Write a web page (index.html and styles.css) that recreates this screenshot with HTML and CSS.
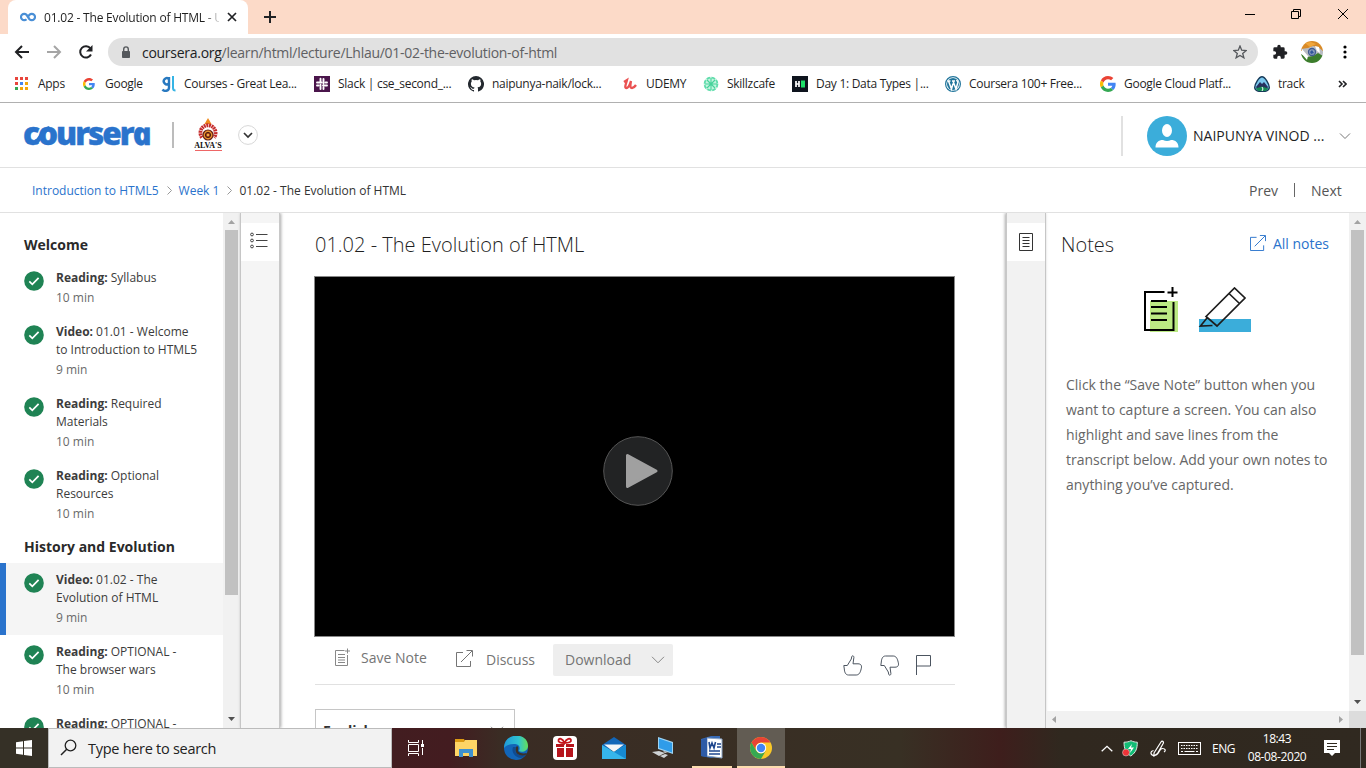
FILE: index.html
```html
<!DOCTYPE html>
<html lang="en">
<head>
<meta charset="utf-8">
<title>01.02 - The Evolution of HTML</title>
<link rel="stylesheet" href="styles.css">
</head>
<body>
<svg class="defs" width="0" height="0">
  <symbol id="check" viewBox="0 0 20 20"><circle cx="10" cy="10" r="9.8" fill="#1f8354"/><path d="M5.3 10.4l3 3 6.3-6.6" fill="none" stroke="#fff" stroke-width="1.7"/></symbol>
  <symbol id="g" viewBox="0 0 48 48"><path fill="#ea4335" d="M24 9.5c3.5 0 6.7 1.2 9.2 3.6l6.9-6.9C35.9 2.4 30.5 0 24 0 14.6 0 6.5 5.4 2.6 13.2l8 6.2C12.4 13.7 17.7 9.5 24 9.5z"/><path fill="#4285f4" d="M47 24.6c0-1.6-.2-3.1-.4-4.6H24v9h12.9c-.6 3-2.3 5.5-4.8 7.2l7.700 6C44.400 38 47 31.800 47 24.600z"/><path fill="#fbbc05" d="M10.500 28.600A14.500 14.500 0 0 1 10.500 19.400l-8-6.200a24 24 0 0 0 0 21.600z"/><path fill="#34a853" d="M24 48c6.500 0 11.900-2.100 15.900-5.800l-7.700-6c-2.200 1.500-4.900 2.300-8.200 2.300-6.300 0-11.600-4.200-13.500-9.900l-8 6.200C6.500 42.600 14.600 48 24 48z"/></symbol>
  <symbol id="share" viewBox="0 0 17 17"><path d="M7 2.500H.5v14h14V11M5 12L16 1M10.500.5h6v6" fill="none" stroke="currentColor"/></symbol>
</svg>
<div class="tabstrip">
  <div class="tab">
    <svg class="fav" width="16" height="10" viewBox="0 0 16 10"><path d="M6.500 7.200A3.200 3.200 0 1 1 6.500 2.800L9.500 7.200A3.200 3.200 0 1 0 9.500 2.800L8.500 4" fill="none" stroke="#4a8fd6" stroke-width="2.200"/></svg>
    <span class="tab-title">01.02 - The Evolution of HTML - U</span>
    <svg width="10" height="10"><path d="M1 1l8 8M9 1L1 9" stroke="#202124" stroke-width="1.700"/></svg>
  </div>
  <svg class="plus" width="12" height="12"><path d="M6 0v12M0 6h12" stroke="#202124" stroke-width="2"/></svg>
  <div class="winbtns">
    <svg width="10" height="12"><path d="M0 6.500h10" stroke="#000"/></svg>
    <svg width="12" height="12"><path d="M1.500 3.500h7v7h-7zM3.500 3.500v-2h7v7h-2" fill="none" stroke="#000"/></svg>
    <svg width="12" height="12"><path d="M1 1l10 10M11 1L1 11" stroke="#000"/></svg>
  </div>
</div>
<div class="toolbar">
  <svg class="nav" width="90" height="16" viewBox="0 0 90 16"><path d="M15 8H2M8 2L2 8l6 6" fill="none" stroke="#202124" stroke-width="2"/><path d="M33 8h13M40 2l6 6-6 6" fill="none" stroke="#a5a5a5" stroke-width="2"/><path d="M76.500 4.500A5.700 5.700 0 1 0 77 10.500" fill="none" stroke="#202124" stroke-width="2"/><path d="M78.500 1v6.500H72z" fill="#202124"/></svg>
  <div class="omnibox">
    <svg width="10" height="13"><path d="M1.500 5.500h7v6h-7z" fill="#55585c" stroke="#55585c"/><path d="M2.700 5V3.200a2.300 2.300 0 0 1 4.600 0V5" fill="none" stroke="#55585c" stroke-width="1.400"/></svg>
    <span class="url"><b>coursera.org</b>/learn/html/lecture/Lhlau/01-02-the-evolution-of-html</span>
    <svg width="14" height="14" viewBox="0 0 14 14"><path d="M7 1l1.700 4.200 4.500.3-3.500 2.900 1.200 4.400L7 10.400l-3.900 2.400 1.200-4.400L.8 5.500l4.500-.3z" fill="none" stroke="#55585c" stroke-width="1.300"/></svg>
  </div>
  <svg class="puzzle" width="16" height="16" viewBox="0 0 24 24"><path fill="#202124" d="M20.500 11H19V7a2 2 0 0 0-2-2h-4V3.500a2.500 2.500 0 0 0-5 0V5H4a2 2 0 0 0-2 2v3.800h1.500a2.700 2.700 0 0 1 0 5.400H2V20c0 1.100.9 2 2 2h3.800v-1.500a2.700 2.700 0 0 1 5.400 0V22H17a2 2 0 0 0 2-2v-4h1.500a2.500 2.500 0 0 0 0-5z"/></svg>
  <svg class="profile" width="22" height="22"><clipPath id="pc"><circle cx="11" cy="11" r="11"/></clipPath><g clip-path="url(#pc)"><path fill="#d98a26" d="M0 0h22v10H0z"/><path fill="#f0a63c" d="M4 2l6-1 5 2-6 3z"/><path fill="#b9bcc2" d="M0 8l7-1 5-2 5 1 5 4v5l-8 2-10-2z"/><path fill="#3c7d2c" d="M0 13l6 3 6-1 5-3 5 3v9H0z"/><path d="M1 8l6 7-1 4-6-7zM14 5l4 1 1 6-3-2z" fill="#fff"/><circle cx="11" cy="11" r="3.500" fill="#8d9fbd" stroke="#405c92" stroke-width="1.300"/><path d="M9 11l2-2 2 3-3 1z" fill="#31549b"/></g></svg>
  <svg width="4" height="14"><circle cx="2" cy="2" r="1.600"/><circle cx="2" cy="7" r="1.600"/><circle cx="2" cy="12" r="1.600"/></svg>
</div>
<div class="bookmarks">
  <div class="bm bm-apps"><svg width="14" height="14"><path fill="#e8453c" d="M1 0h3v3H1zM6 0h3v3H6zM11 0h3v3h-3zM1 5h3v3H1z"/><path fill="#4285f4" d="M6 5h3v3H6z"/><path fill="#f2a60c" d="M11 5h3v3h-3zM6 10h3v3H6zM11 10h3v3h-3z"/><path fill="#34a853" d="M1 10h3v3H1z"/></svg><span>Apps</span></div>
  <div class="bm bm-google"><svg width="12" height="12"><use href="#g"/></svg><span>Google</span></div>
  <div class="bm"><svg width="15" height="16"><path d="M7.800 3a3 3 0 1 0 0 4.500M8 1v10.500c0 4-5 4-6.500 2" fill="none" stroke="#2879c0" stroke-width="2.400"/><path d="M12 0v12c0 2 1 2.500 2.500 2.500" fill="none" stroke="#35b4e5" stroke-width="2"/></svg><span>Courses - Great Lea...</span></div>
  <div class="bm"><svg width="16" height="16"><path fill="#4a154b" d="M0 0h16v16H0z"/><path d="M6.500 2.800v3M3 6.500h4.500M9.500 3v4.500M11.500 6.500h1.500M3 9.500h1.500M6.500 8.800v4.200M9 9.500h4M9.500 11.500v1.500" stroke="#fff" stroke-width="1.900" stroke-linecap="round"/></svg><span>Slack | cse_second_...</span></div>
  <div class="bm"><svg width="16" height="16" viewBox="0 0 16 16"><path fill="#24292f" d="M8 0a8 8 0 0 0-2.530 15.590c.4.070.55-.17.550-.38v-1.330c-2.230.48-2.700-1.070-2.700-1.070-.36-.92-.89-1.170-.89-1.170-.73-.5.060-.49.060-.49.800.06 1.230.83 1.230.83.710 1.220 1.870.87 2.330.66.070-.52.280-.87.510-1.070-1.780-.2-3.640-.89-3.640-3.950 0-.87.310-1.590.82-2.150-.08-.2-.36-1.020.08-2.120 0 0 .67-.21 2.200.82a7.600 7.600 0 0 1 4 0c1.530-1.040 2.200-.82 2.200-.82.440 1.100.16 1.920.08 2.120.51.560.82 1.270.82 2.150 0 3.070-1.870 3.750-3.650 3.950.29.250.54.730.54 1.480v2.160c0 .21.150.46.550.38A8 8 0 0 0 8 0z"/></svg><span>naipunya-naik/lock...</span></div>
  <div class="bm"><svg width="16" height="14"><path d="M2 5l3-2c-1 4-3 8-.5 8S8 7 9 4c-1 5-1 7 1 7 1.500 0 3-1.500 4-3" fill="none" stroke="#ea5252" stroke-width="2.300"/></svg><span>UDEMY</span></div>
  <div class="bm"><svg width="16" height="16"><circle cx="8" cy="8" r="7.300" fill="#c4f3df"/><circle cx="8" cy="8" r="6.400" fill="none" stroke="#5fdcab" stroke-width="1.800" stroke-dasharray="3.500 1.500"/><path d="M8 2v12M2 8h12M4 4l8 8M12 4l-8 8" stroke="#46d39b" stroke-width="1.100"/></svg><span>Skillzcafe</span></div>
  <div class="bm"><svg width="16" height="16"><path fill="#0e141e" d="M0 0h16v16H0z"/><path d="M4 5v6M7 5v6M4 8h3" stroke="#fff" stroke-width="1.700"/><path fill="#1ee069" d="M9 4.500h4v7H9z"/></svg><span>Day 1: Data Types |...</span></div>
  <div class="bm"><svg width="16" height="16"><circle cx="8" cy="8" r="7.400" fill="#fff" stroke="#21759b" stroke-width="1.200"/><circle cx="8" cy="8" r="6" fill="#21759b"/><path d="M2.500 5h3M7 5h3M3.500 5l3 8L8 7.500M8 5l3 8 2-7-1.500-2" fill="none" stroke="#fff" stroke-width="1.500"/></svg><span>Coursera 100+ Free...</span></div>
  <div class="bm"><svg width="16" height="16"><use href="#g"/></svg><span>Google Cloud Platf...</span></div>
  <div class="bm"><svg width="16" height="16"><path d="M8 .8C11 .8 15.300 8 15.300 11.500c0 2-2 3.700-4 3.700H4.700c-2 0-4-1.700-4-3.700C.7 8 5 .8 8 .8z" fill="#7cc8ef" stroke="#163a59" stroke-width="1.400"/><path d="M2 11l4-5 2 2 2-2 4 5-1 2H3z" fill="#27315f"/><path d="M1.500 12.500L8 10.500l6.500 2-3 2.500h-7z" fill="#168a54"/><path d="M8 11l1 2-1 2" stroke="#fff" fill="none"/></svg><span>track</span></div>
  <svg class="more" width="9" height="8"><path d="M1 1l3 3-3 3M5 1l3 3-3 3" fill="none" stroke="#202124" stroke-width="1.600"/></svg>
</div>

<header class="site-header">
  <div class="wordmark">courser<span class="wm-a">a</span><svg class="wm-link" width="40" height="20" viewBox="0 0 40 20"><path d="M12.500 16.800C17.500 15.500 19 4.500 26.500 3.200" fill="none" stroke="#2a73cc" stroke-width="4.400"/></svg></div>
  <div class="vbar"></div>
  <div class="alvas">
    <svg width="28" height="24" viewBox="0 0 28 24"><path d="M14 0l3.500 6h-7z" fill="#ef8a1d"/><path d="M8 19.500A7.600 7.600 0 1 1 20 19.500" fill="none" stroke="#c52b2b" stroke-width="3.800" stroke-dasharray="1.900 .6"/><circle cx="14" cy="17" r="5" fill="#e8912e" stroke="#672016" stroke-width="1.200"/><circle cx="14" cy="17" r="2.600" fill="#b24517" stroke="#421b12"/><circle cx="14" cy="17" r="1" fill="#ffd65a"/></svg>
    <span>ALVA'S</span><i></i>
  </div>
  <svg class="org-drop" width="20" height="20"><circle cx="10" cy="10" r="9.400" fill="#fff" stroke="#d7d7d7"/><path d="M6 8l4 4 4-4" fill="none" stroke="#333" stroke-width="1.700"/></svg>
  <div class="user">
    <svg width="40" height="40"><circle cx="20" cy="20" r="20" fill="#3badda"/><ellipse cx="20" cy="14.500" rx="5" ry="6.500" fill="#fff"/><path d="M8.500 31.500c0-5 3-7.500 7.500-7.500 2.500 1.300 5.500 1.300 8 0 4.500 0 7.500 2.500 7.500 7.500z" fill="#fff"/></svg>
    <span>NAIPUNYA VINOD ...</span>
    <svg width="12" height="8"><path d="M1 1.500l5 5 5-5" fill="none" stroke="#777"/></svg>
  </div>
</header>
<nav class="crumbs">
  <a class="c1">Introduction to HTML5</a><svg width="5" height="9"><path d="M.5.5l4 4-4 4" fill="none" stroke="#999"/></svg><a class="c2">Week 1</a><svg width="5" height="9"><path d="M.5.5l4 4-4 4" fill="none" stroke="#999"/></svg><span class="c3">01.02 - The Evolution of HTML</span>
  <div class="pager"><span>Prev</span><i></i><span>Next</span></div>
</nav>

<div class="content">
  <aside class="lessons">
    <h2>Welcome</h2>
    <div class="item"><svg width="20" height="20"><use href="#check"/></svg><div><p><b>Reading:</b> Syllabus</p><small>10 min</small></div></div>
    <div class="item"><svg width="20" height="20"><use href="#check"/></svg><div><p><b>Video:</b> 01.01 - Welcome<br>to Introduction to HTML5</p><small>9 min</small></div></div>
    <div class="item"><svg width="20" height="20"><use href="#check"/></svg><div><p><b>Reading:</b> Required<br>Materials</p><small>10 min</small></div></div>
    <div class="item"><svg width="20" height="20"><use href="#check"/></svg><div><p><b>Reading:</b> Optional<br>Resources</p><small>10 min</small></div></div>
    <h2 class="second">History and Evolution</h2>
    <div class="item active"><svg width="20" height="20"><use href="#check"/></svg><div><p><b>Video:</b> 01.02 - The<br>Evolution of HTML</p><small>9 min</small></div></div>
    <div class="item"><svg width="20" height="20"><use href="#check"/></svg><div><p><b>Reading:</b> OPTIONAL -<br>The browser wars</p><small>10 min</small></div></div>
    <div class="item"><svg width="20" height="20"><use href="#check"/></svg><div><p><b>Reading:</b> OPTIONAL -</p></div></div>
  </aside>
  <div class="vscroll">
    <svg width="17" height="17"><path d="M5 11l3.500-4 3.500 4z" fill="#a3a3a3"/></svg>
    <div class="thumb thumb-left"></div>
    <svg class="down" width="17" height="17"><path d="M5 6l3.500 4L12 6z" fill="#505050"/></svg>
  </div>
  <div class="rail rail-left"><div class="rail-tab"><svg width="18" height="17"><g fill="none" stroke="#444"><circle cx="2" cy="2.500" r="1.400"/><circle cx="2" cy="8.500" r="1.400"/><circle cx="2" cy="14.500" r="1.400"/><path d="M6 2.500h11.500M6 8.500h11.500M6 14.500h11.500"/></g></svg></div></div>
  <main class="lecture">
    <h1>01.02 - The Evolution of HTML</h1>
    <div class="video"><svg width="70" height="70"><circle cx="35" cy="35" r="34.300" fill="#222324" stroke="#555"/><path d="M24.500 19.500v31L53 35z" fill="#a0a0a0" stroke="#a0a0a0" stroke-width="3" stroke-linejoin="round"/></svg></div>
    <div class="actions">
      <svg class="a-note" width="15" height="18"><path d="M9.500 2.500h-9v15h12V7M3 6.500h7M3 9.500h7M3 12h7M3 14.500h7M12.500.5v5M10 3h5" fill="none" stroke="#888"/></svg><span class="t-save">Save Note</span>
      <svg class="a-share" width="17" height="17"><use href="#share"/></svg><span class="t-discuss">Discuss</span>
      <div class="download"><span>Download</span><svg width="14" height="8"><path d="M1 .8l6 6 6-6" fill="none" stroke="#888"/></svg></div>
      <svg class="a-react" width="92" height="22"><g fill="none" stroke="#4c5560"><path d="M.8 10.500h3.500L8.300 4l.4-2.200c.3-1.600 2.300-1.100 2.200.6L10 8.800h5c3.500 0 4 2.500 3.200 5-.8 3.500-2 6.200-5 6.200H5.500C2.500 20 1.500 17 1.300 14z"/><path d="M37.800 11.500h3.500l4 6.500.4 2.200c.3 1.600 2.300 1.100 2.200-.6L47 13.200h5c3.500 0 4-2.500 3.200-5C54.400 4.700 53.200 2 50.200 2h-7.700c-3 0-4 3-4.200 6z" transform="translate(0 -1)"/><path d="M73.500 20V.5h14v10.500h-14"/></g></svg>
    </div>
    <div class="lang"><b>English</b><svg width="14" height="8"><path d="M1 .8l6 6 6-6" fill="none" stroke="#888"/></svg></div>
  </main>
  <div class="rail rail-right"><div class="rail-tab"><svg width="14" height="18"><path d="M.5.5h13v17H.5zM3.500 4.500h7M3.500 7.500h7M3.500 10.500h7M3.500 13.500h7" fill="none" stroke="#333"/></svg></div></div>
  <aside class="notes">
    <div class="notes-main">
      <div class="notes-head"><h3>Notes</h3><a><svg width="16" height="16" viewBox="0 0 17 17"><use href="#share"/></svg><span>All notes</span></a></div>
      <svg class="notes-art" width="110" height="48"><path fill="#bbe983" d="M7 14h28v31H7z"/><path d="M21.500 5H2v38h28.500V15M8 14h16M8 20h16M8 26.500h16M8 33h16M29.500 0v10M24.500 5.500h10" fill="none" stroke="#000" stroke-width="2"/><path fill="#3badda" d="M56 32h52v13H56z"/><path d="M63 29.500L91.500 1l10.500 10L74 39zM86 6.500L97 17M64 31l-6.500 8 12-.5" fill="none" stroke="#1d1d1d" stroke-width="1.700"/></svg>
      <p>Click the “Save Note” button when you<br>want to capture a screen. You can also<br>highlight and save lines from the<br>transcript below. Add your own notes to<br>anything you’ve captured.</p>
    </div>
    <div class="hscroll"><svg width="17" height="17"><path d="M10 5L6 8.500l4 3.500z" fill="#a3a3a3"/></svg><svg width="17" height="17"><path d="M7 5l4 3.500L7 12z" fill="#a3a3a3"/></svg></div>
  </aside>
  <div class="vscroll right">
    <svg width="17" height="17"><path d="M5 11l3.500-4 3.500 4z" fill="#a3a3a3"/></svg>
    <div class="thumb thumb-right"></div>
    <svg class="down" width="17" height="17"><path d="M5 6l3.500 4L12 6z" fill="#505050"/></svg>
    <div class="corner"></div>
  </div>
</div>

<footer class="taskbar">
  <div class="start"><svg width="16" height="16"><path fill="#fff" d="M0 2.300L7 1.300v6.200H0zM8 1.100L16 0v7.500H8zM0 8.500h7v6.200l-7-1zM8 8.500h8V16l-8-1.100z"/></svg></div>
  <div class="search"><svg width="18" height="18"><circle cx="10.500" cy="6.500" r="5.300" fill="none" stroke="#222" stroke-width="1.300"/><path d="M6.700 10.300L1 16" stroke="#222" stroke-width="1.500"/></svg><span>Type here to search</span></div>
  <div class="apps">
    <div><svg width="18" height="16"><path d="M1.500 0v2.500h10V0M1.500 16v-2.500h10V16M1.500 4.500h10v7h-10zM15.500 0v4M15.500 8v7" fill="none" stroke="#fff"/><path fill="#fff" d="M14 4h3v3h-3z"/></svg></div>
    <div><svg width="22" height="20"><path fill="#dc9b13" d="M0 1h9l1 2v5H0z"/><path fill="#fdd566" d="M0 4h9l1-2h12v16H0z"/><path fill="#3e91d0" d="M4 11h14v8h-4v-4H8v4H4z"/></svg></div>
    <div><svg width="24" height="24"><defs><linearGradient id="eg"><stop offset="0" stop-color="#2099d8"/><stop offset=".6" stop-color="#2fc3d2"/><stop offset="1" stop-color="#65df58"/></linearGradient></defs><circle cx="12" cy="12" r="12" fill="#1265b8"/><path d="M0 11C1-4 24-4 24 10c0 5-6 7-9 5 2-5-1-7-5-7C6 8 2 9 0 12z" fill="url(#eg)"/><path d="M9 11c-2 5 2 10 7 11 3 0 5-2 6-4-8 3-13-2-10-7z" fill="#0f4b91"/><path d="M13 10c2 1 1 3 1 5 1 2 5 3 9 2l-1.500 2c-5 1.500-10-1-10-5 0-2 .5-3 1.500-4z" fill="#39312a"/></svg></div>
    <div><svg width="24" height="24"><rect width="24" height="24" rx="4" fill="#fff"/><path d="M3 8h8v3H3zM13 8h8v3h-8zM4 12h7v9H4zM13 12h7v9h-7z" fill="#b6151d"/><path d="M11.500 7C7 7 5 6 5.500 4s4-2 6 3c2-5 6-5 6.500-3s-2 3-6.500 3z" fill="none" stroke="#c5161d" stroke-width="1.800"/></svg></div>
    <div><svg width="24" height="22"><path fill="#1266b8" d="M0 8L12 0l12 8v5H0z"/><path fill="#f4f5f7" d="M2 7.500h20L12 15z"/><path fill="#36b5eb" d="M0 8l12 7 12-7v14H0z"/><path fill="#1689d1" d="M12 15l12 7V8z"/></svg></div>
    <div><svg width="24" height="22"><path fill="#9fd4f3" d="M7 0l15 5v12L7 12z"/><path fill="#2f9ce9" d="M8 1.500l13 4.500v9.500L8 11z"/><path fill="#ced2d4" d="M1 15l7-1 6 2-6 3zM9 19l5-2 3 1-4 3zM12 14l5 1-3 1z"/></svg></div>
    <div class="open"><svg width="24" height="24"><path fill="#3769b3" d="M1 3l10-3h9v20l-9 2-10-2z"/><path fill="#fff" d="M7 2l15 1v19L7 20z" stroke="#8ba4c6"/><path fill="#2e5ba7" d="M1 4l6-2v19l-6-1z"/><path d="M9 6l1 6L12 7l2 5 1.500-6M17 8h4M17 11h4M9 15h11M9 18h11" fill="none" stroke="#1f478e" stroke-width="1.600"/></svg></div>
    <div class="open current"><svg width="22" height="22"><circle cx="11" cy="11" r="11" fill="#fac928"/><path d="M1.500 5.500A11 11 0 0 1 20.500 5.500H11A5.500 5.500 0 0 0 6.200 13.800z" fill="#e74335"/><path d="M1.500 5.500A11 11 0 0 0 11 22l4.800-8.300a5.500 5.500 0 0 1-9.600 0z" fill="#36a852"/><circle cx="11" cy="11" r="5.200" fill="#fff"/><circle cx="11" cy="11" r="4.200" fill="#4285f4"/></svg></div>
  </div>
  <div class="tray">
    <svg class="t-up" width="12" height="7"><path d="M.7 6.300l5.300-5 5.300 5" fill="none" stroke="#fff" stroke-width="1.300"/></svg>
    <svg class="t-shield" width="16" height="17"><path d="M9 .7c2 1 4 1.500 6.300 1.500 0 6-1 10-6.500 13.800C4 13 2 9 2 2.200 5 2.200 7 1.700 9 .7z" fill="#12bd76" stroke="#d8e8e0"/><path d="M10 4L6 9h3l-1 4 4-5.500H9z" fill="#fff"/><circle cx="4" cy="12.500" r="3.500" fill="#ee3338" stroke="#ddd" stroke-width=".5"/></svg>
    <svg class="t-pen" width="17" height="17"><path d="M4 13L11 2c1-1.500 3-.5 2.300 1.200L7.500 13.500 4 16zM3.500 10.500c-4 1-3 5 1 5 5 0 4-7 8-7 3 0 3.500 2 1.500 3.500" fill="none" stroke="#fff" stroke-width="1.200"/></svg>
    <svg class="t-key" width="23" height="13"><rect x=".5" y=".5" width="22" height="12" fill="none" stroke="#fff"/><path d="M3 3.500h17M3 6.500h17" stroke="#fff" stroke-dasharray="1.500 1"/><path d="M3 9.500h2M6.500 9.500h10M18 9.500h2" stroke="#fff"/></svg>
    <span class="eng">ENG</span>
    <div class="clock"><span class="time">18:43</span><span class="date">08-08-2020</span></div>
    <svg class="t-msg" width="16" height="16"><path fill="#fff" d="M0 0h16v13H11l-3 3-3-3H0z"/><path d="M3 3.500h10M3 6.500h10M3 9.500h7" stroke="#30291f"/></svg>
    <i></i>
  </div>
</footer>
</body>
</html>
```
FILE: styles.css
```css
* { box-sizing: border-box; }
body { margin: 0; width: 1366px; height: 768px; overflow: hidden; display: flex; flex-direction: column; background: #fff; font-family: "Open Sans", "Noto Sans", sans-serif; color: #1f1f1f; }
svg { display: block; flex: none; }
h1, h2, h3, p { margin: 0; font-weight: 400; }
span, a { white-space: nowrap; }
.defs { position: absolute; }

.tabstrip { flex: none; height: 34px; background: #fcdac8; display: flex; }
.tab { margin-left: 8px; width: 240px; height: 34px; background: #fff; border-radius: 8px 8px 0 0; display: flex; align-items: center; padding-left: 12px; }
.tab-title { margin-left: 8px; width: 175px; overflow: hidden; font-size: 12px; letter-spacing: -.2px; margin-right: 8px; -webkit-mask-image: linear-gradient(90deg, #000 160px, transparent 178px); mask-image: linear-gradient(90deg, #000 160px, transparent 178px); }
.plus { margin: 11px 0 0 16px; }
.winbtns { margin-left: auto; padding: 8px 17px 0 0; display: flex; gap: 35px; }

.toolbar { flex: none; height: 36px; display: flex; align-items: center; padding-left: 14px; }
.omnibox { margin-left: 4px; width: 1150px; height: 28px; border-radius: 14px; background: #e1e1e1; display: flex; align-items: center; padding: 0 11px 0 13px; }
.url { flex: 1; margin-left: 11px; font-size: 14px; color: #5f6063; letter-spacing: -.28px; }
.url b { font-weight: 400; color: #202124; }
.puzzle { margin-left: 14px; }
.profile { margin: 0 20px 0 13px; }

.bookmarks { flex: none; height: 33px; border-bottom: 1px solid #b0b0b0; padding: 0 0 5px 14px; display: grid; align-items: center; grid-template-columns: 68px 79px 153px 154px 154px 81px 89px 153px 155px 154px 84px 12px; font-size: 12px; letter-spacing: -.28px; }
.bm { display: flex; align-items: center; gap: 8px; }
.bm-apps { gap: 10px; }
.bm-google { gap: 10px; padding-left: 1px; }

.site-header { flex: none; height: 65px; border-bottom: 1px solid #e1e1e1; display: flex; align-items: center; padding-left: 23px; }
.wordmark { position: relative; width: 149px; height: 34px; font: 800 31.500px/30px "Open Sans", sans-serif; letter-spacing: -2px; color: #2a73cc; white-space: nowrap; -webkit-text-stroke: .4px #2a73cc; }
.wm-a { display: inline-block; font-style: italic; transform: skewX(12deg); }
.wm-link { position: absolute; left: 0; top: 7px; }
.vbar { width: 2px; height: 26px; background: #bcbcbc; }
.alvas { margin-left: 20px; width: 28px; height: 34px; display: flex; flex-direction: column; align-items: center; }
.alvas span { font: 700 8px/8px "Liberation Serif", serif; color: #111; }
.alvas i { width: 27px; height: 1px; margin-top: 0; background: #e66; }
.org-drop { margin-left: 16px; }
.user { margin: 1px 0 0 auto; width: 245px; height: 40px; border-left: 2px solid #e1e1e1; display: flex; align-items: center; padding-left: 24px; }
.user span { width: 141px; margin: 0 5px 0 6px; font-size: 14px; }

.crumbs { flex: none; height: 45px; border-bottom: 1px solid #e1e1e1; display: flex; align-items: center; padding-left: 32px; font-size: 12px; color: #333; }
.crumbs a { color: #2a73cc; }
.crumbs svg { margin: 0 7px 0 8px; }
.pager { margin-left: auto; width: 117px; display: flex; align-items: center; font-size: 14px; color: #555; }
.pager i { width: 1px; height: 14px; background: #666; margin: 0 16px; }

.content { flex: none; height: 515px; display: flex; overflow: hidden; }
.lessons { flex: none; width: 223px; overflow: hidden; }
.lessons h2 { height: 48px; padding: 16px 0 0 24px; font: 700 14px/32px "Open Sans", sans-serif; color: #2a2a2a; }
.lessons h2.second { height: 32px; padding-top: 0; }
.item { display: flex; padding: 8px 0 8px 24px; font-size: 12px; line-height: 18px; color: #3c3c3c; }
.item svg { margin: 2px 12px 0 0; }
.item b { font-weight: 700; }
.item small { display: block; margin-top: 2px; font-size: 12px; color: #6a6a6a; }
.item.active { background: #f5f5f5; border-left: 6px solid #2a73cc; padding-left: 18px; }
.vscroll { flex: none; width: 17px; background: #f1f1f1; display: flex; flex-direction: column; }
.thumb { margin: 0 2px; background: #c1c1c1; }
.thumb-left { height: 365px; }
.thumb-right { height: 425px; }
.down { margin-top: auto; }
.corner { height: 17px; background: #dcdcdc; }
.rail { flex: none; background: #f5f5f5; padding-top: 10px; }
.rail-left { width: 40px; border-left: 1px solid #c6c6c6; border-right: 1px solid #c8c8c8; box-shadow: 1px 0 3px rgba(0,0,0,.35); }
.rail-left .rail-tab { padding: 0 3px 4px 0; }
.rail-right { width: 40px; background: #f2f2f2; border-left: 1px solid #c8c8c8; border-right: 1px solid #c6c6c6; box-shadow: -1px 0 3px rgba(0,0,0,.35); }
.rail-tab { height: 38px; background: #fff; display: flex; align-items: center; justify-content: center; }

.lecture { flex: none; width: 726px; padding-left: 34px; }
h1 { height: 63px; padding-left: 1px; font-size: 20px; line-height: 64px; font-weight: 300; color: #1f1f1f; }
.video { width: 641px; height: 361px; background: #000; border: 1px solid #888; display: flex; align-items: center; justify-content: center; padding: 28px 0 0 7px; }
.actions { margin-left: 1px; width: 640px; height: 48px; border-bottom: 1px solid #e1e1e1; display: flex; align-items: flex-start; font-size: 14px; line-height: 20px; color: #757575; }
.a-note { margin: 11px 11px 0 20px; }
.t-save { width: 95px; margin-top: 11px; }
.a-share { margin-top: 13px; }
.t-discuss { width: 67px; margin: 13px 0 0 13px; }
.download { margin-top: 7px; width: 120px; height: 32px; border-radius: 2px; background: #eee; display: flex; align-items: center; padding: 0 8px 0 12px; justify-content: space-between; }
.a-react { margin: 18px 0 0 170px; }
.lang { margin: 24px 0 0 1px; width: 200px; height: 42px; border: 1px solid #c6c6c6; display: flex; align-items: center; justify-content: space-between; padding: 0 10px 0 7px; font-size: 14px; color: #333; }

.notes { flex: none; width: 303px; display: flex; flex-direction: column; justify-content: space-between; color: #333; }
.notes-main { padding: 15px 0 0 15px; }
.notes-head { display: flex; justify-content: space-between; align-items: center; width: 268px; height: 32px; }
h3 { font-size: 20px; font-weight: 300; color: #1f1f1f; }
.notes-head a { display: flex; align-items: center; gap: 7px; color: #2a73cc; font-size: 14px; padding-bottom: 2px; }
.notes-art { margin: 27px 0 0 82px; }
.notes-main p { margin: 37px 0 0 5px; font-size: 14px; line-height: 25px; color: #666; white-space: nowrap; }
.hscroll { height: 17px; background: #f1f1f1; display: flex; justify-content: space-between; }

.taskbar { flex: none; height: 40px; display: flex; color: #fff; background: linear-gradient(90deg, #353026 0, #353026 48px, #421d20 392px, #431c20 450px, #3a2c24 500px, #383024 900px, #3e1e1c 1000px, #30281f 1060px, #302920 1366px); }
.start { width: 48px; display: flex; align-items: center; justify-content: center; }
.search { width: 344px; background: #f2f2f2; border: 1px solid #bbb; color: #222; display: flex; align-items: center; padding-left: 11px; gap: 10px; font-size: 14.500px; letter-spacing: -.28px; }
.apps { display: grid; grid-template-columns: 48px 51px 49px 49px 49px 49px 50px 48px; width: 393px; }
.apps div { display: flex; align-items: center; justify-content: center; }
.apps .open { border-bottom: 2px solid #fcdcae; padding-top: 2px; margin: 0 5px; }
.apps .current { background-color: #625c53; margin: 0; }
.tray { flex: 1; display: flex; align-items: center; padding-left: 316px; font-size: 12px; }
.t-shield { margin-left: 9px; }
.t-pen { margin-left: 12px; }
.t-key { margin-left: 11px; }
.eng { margin-left: 11px; width: 23px; letter-spacing: -.5px; }
.clock { margin-left: 11px; width: 62px; display: flex; flex-direction: column; align-items: center; line-height: 18px; letter-spacing: -.4px; }
.t-msg { margin-left: 16px; }
.tray i { width: 1px; height: 40px; background: #777; margin-left: 20px; }
```
